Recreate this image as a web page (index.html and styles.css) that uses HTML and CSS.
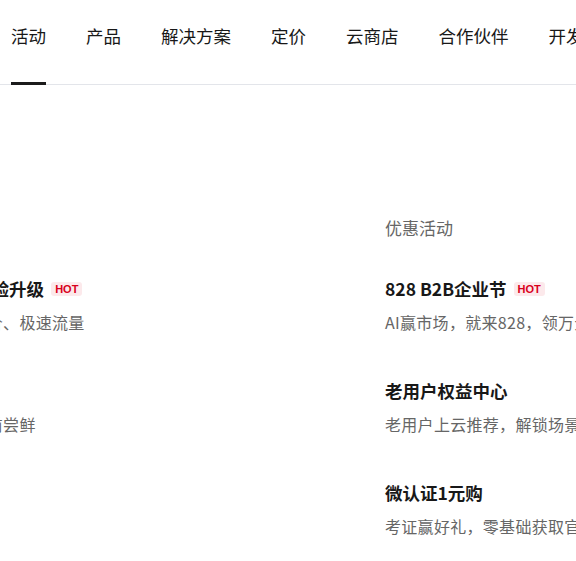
FILE: index.html
```html
<!DOCTYPE html>
<html lang="zh-CN">
<head>
<meta charset="utf-8">
<title>活动</title>
<link rel="stylesheet" href="styles.css">
</head>
<body>
<header class="nav">
  <div class="tab active">活动</div>
  <div class="tab">产品</div>
  <div class="tab">解决方案</div>
  <div class="tab">定价</div>
  <div class="tab">云商店</div>
  <div class="tab">合作伙伴</div>
  <div class="tab">开发者</div>
</header>
<main class="panel">
  <section class="col">
    <div class="col-title">热门活动</div>
    <div class="items">
      <div class="item">
        <div class="item-title">ECS服务器体验升级<span class="hot">HOT</span></div>
        <div class="item-desc">更高性能、低价、极速流量</div>
      </div>
      <div class="item">
        <div class="item-title">免费试用</div>
        <div class="item-desc">新品试用，提前尝鲜</div>
      </div>
    </div>
  </section>
  <section class="col">
    <div class="col-title">优惠活动</div>
    <div class="items">
      <div class="item">
        <div class="item-title">828 B2B企业节<span class="hot">HOT</span></div>
        <div class="item-desc">AI赢市场，就来828，领万元补贴</div>
      </div>
      <div class="item">
        <div class="item-title">老用户权益中心</div>
        <div class="item-desc">老用户上云推荐，解锁场景权益</div>
      </div>
      <div class="item">
        <div class="item-title">微认证1元购</div>
        <div class="item-desc">考证赢好礼，零基础获取官方认证</div>
      </div>
    </div>
  </section>
</main>
</body>
</html>
```
FILE: styles.css
```css
html, body {
  margin: 0;
  padding: 0;
  background: #ffffff;
  overflow: hidden;
}
body {
  font-family: "Noto Sans CJK SC", "Noto Sans", sans-serif;
  color: #181818;
  width: 576px;
  height: 561px;
}
.nav {
  display: flex;
  gap: 40px;
  padding-left: 11px;
  height: 84px;
  border-bottom: 1px solid #e3e5ea;
  white-space: nowrap;
}
.tab {
  position: relative;
  flex: none;
  font-size: 17.5px;
  line-height: 26px;
  padding-top: 23px;
  color: #181818;
}
.tab.active::after {
  content: "";
  position: absolute;
  left: 0;
  right: 0;
  bottom: -1px;
  height: 3px;
  background: #1b1b1b;
}
.panel {
  display: grid;
  grid-template-columns: 456px 300px;
  column-gap: 40px;
  margin-left: -111px;
  padding-top: 131px;
  white-space: nowrap;
}
.col-title {
  font-size: 17px;
  line-height: 24px;
  color: #666666;
}
.items {
  display: flex;
  flex-direction: column;
  gap: 44px;
  margin-top: 36px;
}
.item {
  display: flex;
  flex-direction: column;
  gap: 8px;
}
.item-title {
  display: flex;
  align-items: center;
  font-size: 17.5px;
  line-height: 26px;
  font-weight: 700;
  color: #181818;
}
.item-desc {
  font-size: 16px;
  line-height: 24px;
  color: #666666;
  letter-spacing: 0.3px;
}
.hot {
  display: inline-flex;
  align-items: center;
  height: 14px;
  padding: 0 4px;
  margin-left: 7px;
  border-radius: 3px;
  background: #fce9eb;
  color: #d9001b;
  font-family: "Liberation Sans", Arial, sans-serif;
  font-size: 11px;
  font-weight: 700;
}
```
